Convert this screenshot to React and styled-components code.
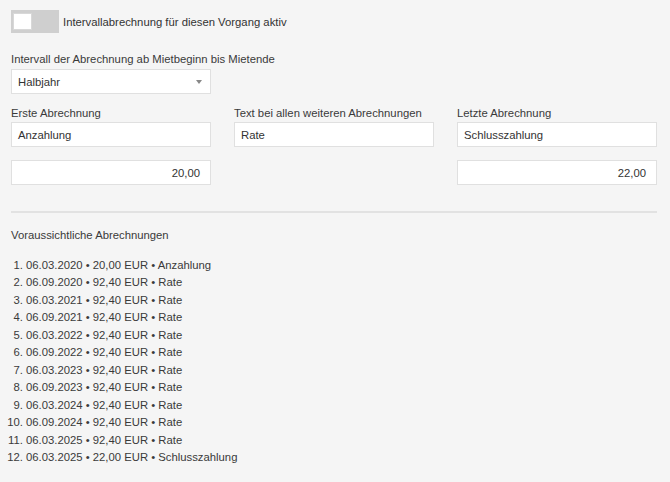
import React from "react";
import styled, { createGlobalStyle } from "styled-components";

const Global = createGlobalStyle`
  html, body { margin: 0; padding: 0; background: #f5f5f5; }
  body { font-family: "Liberation Sans", Arial, sans-serif; color: #333; }
  * { box-sizing: border-box; }
`;

const Page = styled.div`
  width: 670px;
  min-height: 482px;
  padding: 10px 13px 0 11px;
  font-size: 11.3px;
  background: #f5f5f5;
`;

const ToggleRow = styled.label`
  display: flex;
  align-items: center;
  gap: 4px;
  height: 23px;
`;

const Switch = styled.span`
  width: 48px;
  height: 23px;
  background: #cfcfcf;
  padding: 3px 2px;
  display: flex;
  justify-content: ${(p) => (p.$on ? "flex-end" : "flex-start")};
`;

const Knob = styled.span`
  width: 19px;
  height: 17px;
  background: #fff;
  border: 1px solid #d8d8d8;
`;

const Label = styled.div`
  line-height: 14px;
  color: #3a3a3a;
  white-space: nowrap;
  margin-bottom: ${(p) => p.$mb ?? 2}px;
`;

const Field = styled.div`
  display: flex;
  flex-direction: column;
  margin-top: ${(p) => p.$mt ?? 0}px;
`;

const Select = styled.div`
  width: 200px;
  height: 25px;
  background: #fff;
  border: 1px solid #e0e0e0;
  display: flex;
  align-items: center;
  justify-content: space-between;
  padding: 0 8px 0 6px;
`;

const Caret = styled.span`
  width: 0;
  height: 0;
  border-left: 3px solid transparent;
  border-right: 3px solid transparent;
  border-top: 4px solid #888;
`;

const Grid = styled.div`
  display: grid;
  grid-template-columns: repeat(3, 200px);
  column-gap: 23px;
  row-gap: 13px;
  margin-top: 12px;
  align-items: end;
`;

const Input = styled.div`
  height: 25px;
  background: #fff;
  border: 1px solid #e0e0e0;
  display: flex;
  align-items: center;
  justify-content: ${(p) => (p.$right ? "flex-end" : "flex-start")};
  padding: 0 10px 0 6px;
`;

const Divider = styled.hr`
  border: none;
  height: 2px;
  background: #e2e2e2;
  margin: 26px 0 0 0;
`;

const Heading = styled.div`
  margin-top: 15px;
  line-height: 14px;
  color: #3a3a3a;
`;

const List = styled.ol`
  margin: 15px 0 0 0;
  padding-left: 15px;
  line-height: 17.45px;
  color: #3a3a3a;
`;

const items = [
  ["06.03.2020", "20,00", "Anzahlung"],
  ["06.09.2020", "92,40", "Rate"],
  ["06.03.2021", "92,40", "Rate"],
  ["06.09.2021", "92,40", "Rate"],
  ["06.03.2022", "92,40", "Rate"],
  ["06.09.2022", "92,40", "Rate"],
  ["06.03.2023", "92,40", "Rate"],
  ["06.09.2023", "92,40", "Rate"],
  ["06.03.2024", "92,40", "Rate"],
  ["06.09.2024", "92,40", "Rate"],
  ["06.03.2025", "92,40", "Rate"],
  ["06.03.2025", "22,00", "Schlusszahlung"],
];

export default function App() {
  return (
    <>
      <Global />
      <Page>
        <ToggleRow>
          <Switch>
            <Knob />
          </Switch>
          <span>Intervallabrechnung für diesen Vorgang aktiv</span>
        </ToggleRow>

        <Field $mt={19}>
          <Label $mb={3}>Intervall der Abrechnung ab Mietbeginn bis Mietende</Label>
          <Select>
            <span>Halbjahr</span>
            <Caret />
          </Select>
        </Field>

        <Grid>
          <div>
            <Label>Erste Abrechnung</Label>
            <Input>Anzahlung</Input>
          </div>
          <div>
            <Label>Text bei allen weiteren Abrechnungen</Label>
            <Input>Rate</Input>
          </div>
          <div>
            <Label>Letzte Abrechnung</Label>
            <Input>Schlusszahlung</Input>
          </div>
          <Input $right>20,00</Input>
          <div />
          <Input $right>22,00</Input>
        </Grid>

        <Divider />
        <Heading>Voraussichtliche Abrechnungen</Heading>
        <List>
          {items.map(([d, a, t], i) => (
            <li key={i}>
              {d} • {a} EUR • {t}
            </li>
          ))}
        </List>
      </Page>
    </>
  );
}
